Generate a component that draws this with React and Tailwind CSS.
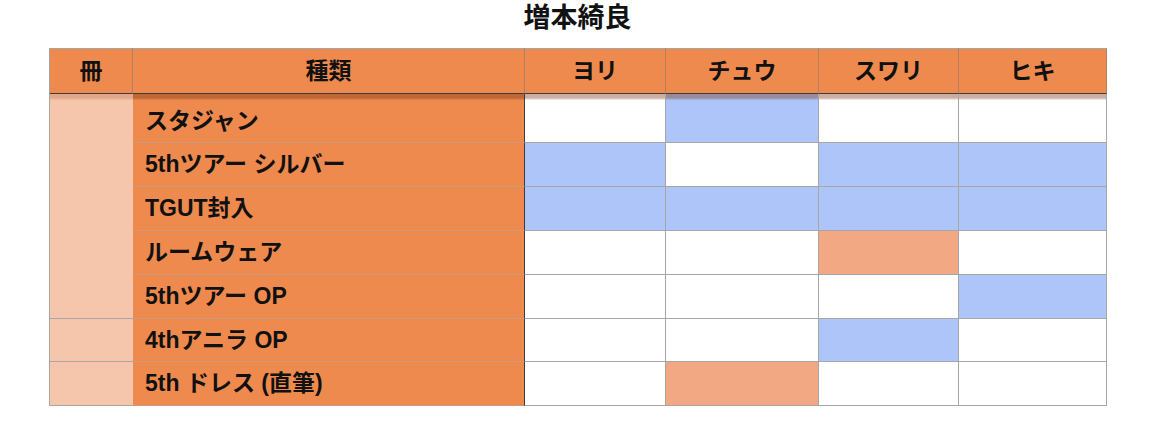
import React from 'react';

const COLS = ['ヨリ', 'チュウ', 'スワリ', 'ヒキ'];

const ROWS = [
  { name: 'スタジャン', cells: ['w', 'b', 'w', 'w'] },
  { name: '5thツアー シルバー', cells: ['b', 'w', 'b', 'b'] },
  { name: 'TGUT封入', cells: ['b', 'b', 'b', 'b'] },
  { name: 'ルームウェア', cells: ['w', 'w', 's', 'w'] },
  { name: '5thツアー OP', cells: ['w', 'w', 'w', 'b'] },
  { name: '4thアニラ OP', cells: ['w', 'w', 'b', 'w'] },
  { name: '5th ドレス (直筆)', cells: ['w', 's', 'w', 'w'] },
];

const fill = {
  w: 'bg-white',
  b: 'bg-[#adc5f8]',
  s: 'bg-[#f2a882]',
};

const band = 'shadow-[inset_0_7px_2px_-2px_rgba(120,50,20,0.4)]';

export default function App() {
  return (
    <div
      className="w-[1170px] h-[438px] bg-white text-[#111]"
      style={{ fontFamily: '"Liberation Sans", "Noto Sans CJK JP", sans-serif' }}
    >
      <div className="ml-[49px] w-[1057px]">
        <h1 className="h-[36px] mb-[12px] text-center text-[27px] leading-[36px] font-bold">増本綺良</h1>

        <div className="grid grid-cols-[83px_392px_141px_153px_140px_148px] grid-rows-[46px_49px_44px_44px_44px_44px_43px_44px] border-l border-[#a6a6a6]">
          {/* header */}
          <div className="flex items-center justify-center bg-[#ee8a4e] border-t border-r border-b border-t-[#a6a6a6] border-r-[#b08060] border-b-[#3d3d3d] text-[23px] font-bold">冊</div>
          <div className="flex items-center justify-center bg-[#ee8a4e] border-t border-r border-b border-t-[#a6a6a6] border-r-[#b08060] border-b-[#3d3d3d] text-[23px] font-bold">種類</div>
          {COLS.map((c) => (
            <div
              key={c}
              className="flex items-center justify-center bg-[#ee8a4e] border-t border-r border-b border-t-[#a6a6a6] border-r-[#b08060] border-b-[#3d3d3d] text-[23px] font-bold"
            >
              {c}
            </div>
          ))}

          {ROWS.map((row, i) => {
            const first = i === 0;
            return (
              <React.Fragment key={row.name}>
                {i === 0 && (
                  <div className="row-span-5 bg-[#f5c6ac] border-b border-[#a6a6a6] shadow-[inset_0_7px_2px_-2px_rgba(160,80,40,0.25)]" />
                )}
                {i >= 5 && <div className="bg-[#f5c6ac] border-b border-[#a6a6a6]" />}
                <div
                  className={`flex items-center pl-[12px] bg-[#ee8a4e] border-r border-b border-r-[#3d3d3d] border-b-[#c99a80] text-[23px] font-bold ${
                    first ? `pt-[6px] ${band}` : ''
                  }`}
                >
                  {row.name}
                </div>
                {row.cells.map((c, j) => (
                  <div
                    key={j}
                    className={`${fill[c]} border-r border-b border-[#a6a6a6] ${first ? band : ''}`}
                  />
                ))}
              </React.Fragment>
            );
          })}
        </div>
      </div>
    </div>
  );
}
